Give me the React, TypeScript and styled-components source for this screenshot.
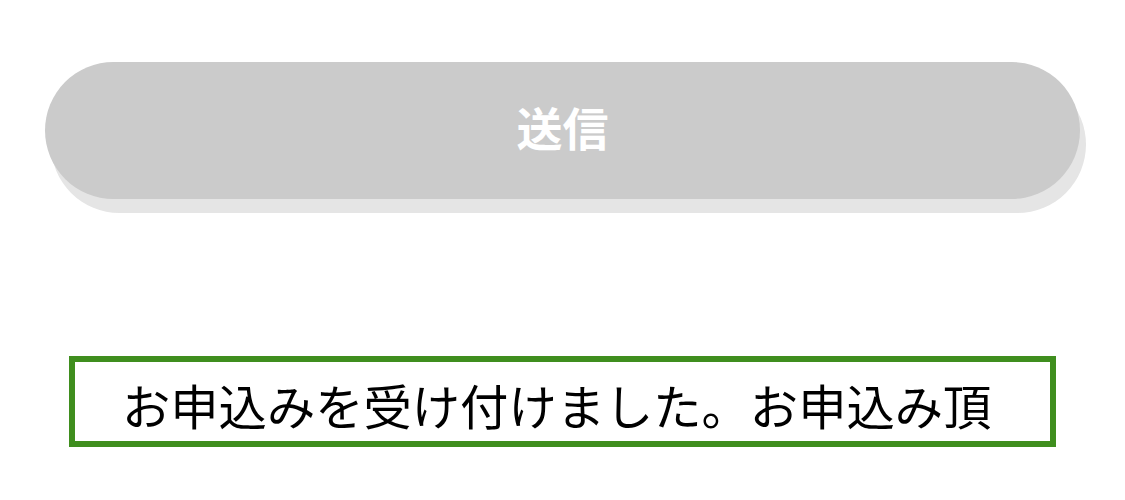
import React from "react";
import styled, { createGlobalStyle } from "styled-components";

const Global = createGlobalStyle`
  html, body {
    margin: 0;
    padding: 0;
    background: #ffffff;
  }
  body {
    font-family: "Noto Sans CJK JP", "Noto Sans", sans-serif;
  }
`;

const Page = styled.main`
  display: flex;
  flex-direction: column;
  padding: 62px 45px 0;
  gap: 157px;
`;

const SubmitButton = styled.button`
  display: flex;
  align-items: center;
  justify-content: center;
  width: 100%;
  height: 137px;
  border: none;
  border-radius: 69px;
  background: #cbcbcb;
  box-shadow: 6px 14px 0 #e5e5e5;
  color: #ffffff;
  font-family: "Noto Sans CJK JP", sans-serif;
  font-weight: 700;
  font-size: 46px;
  line-height: 1;
  padding: 0 0 9px;
  cursor: default;
`;

const Notice = styled.div`
  display: flex;
  align-items: center;
  margin: 0 24px;
  height: 91px;
  box-sizing: border-box;
  border: 6px solid #3f8e1e;
  padding: 6px 30px 0 47px;
`;

const NoticeText = styled.p`
  margin: 0;
  color: #000000;
  font-family: "Noto Sans CJK JP", sans-serif;
  font-weight: 400;
  font-size: 48.3px;
  line-height: 1.2;
  white-space: nowrap;
`;

export default function App() {
  return (
    <>
      <Global />
      <Page>
        <SubmitButton type="button">送信</SubmitButton>
        <Notice>
          <NoticeText>お申込みを受け付けました。お申込み頂</NoticeText>
        </Notice>
      </Page>
    </>
  );
}
